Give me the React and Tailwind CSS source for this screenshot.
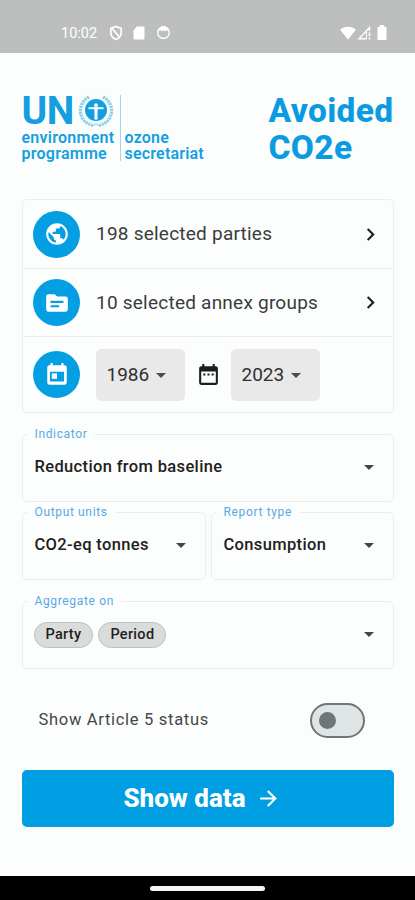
import React, { useState } from "react";
import {
  MdArrowDropDown,
  MdArrowForward,
  MdChevronRight,
  MdDateRange,
  MdPublic,
  MdTopic,
} from "react-icons/md";

const StatusBar = () => (
  <div className="flex h-[53px] items-center bg-[#bcbfbd] pt-3 pr-[28px] pl-[61px] text-white">
    <span className="mt-[3px] w-[38px] text-[14.500px] leading-none whitespace-nowrap">10:02</span>
    <svg className="ml-[10px] h-[16px] w-[14px]" viewBox="0 0 14 16" fill="none" stroke="currentColor" strokeWidth="1.700">
      <path d="M7 1.500 12.200 3.400V8c0 3-2.200 5.300-5.200 6.400C4 13.300 1.800 11 1.800 8V3.400Z" />
      <path d="m3 3.500 7.500 8.500" />
    </svg>
    <svg className="ml-[10px] h-[14px] w-[12px]" viewBox="0 0 12 14" fill="currentColor">
      <path d="M4 .5h6.500a1 1 0 0 1 1 1v11a1 1 0 0 1-1 1h-9a1 1 0 0 1-1-1V4.500Z" />
    </svg>
    <svg className="ml-[11px] h-[15px] w-[15px]" viewBox="0 0 15 15">
      <circle cx="7.500" cy="7.700" r="5.800" fill="none" stroke="currentColor" strokeWidth="1.400" />
      <path d="M2 6.600C2.600 3.200 4.700 1 7.500 1S12.400 3.200 13 6.600L10.600 5 9 6.500 7.500 5 6 6.500 4.400 5Z" fill="currentColor" />
    </svg>
    <svg className="ml-auto h-[14px] w-[16px]" viewBox="0 0 16 14" fill="currentColor">
      <path d="M0 3.800C4.500-.4 11.500-.4 16 3.800L8 13.500Z" />
    </svg>
    <svg className="ml-[1px] h-[14px] w-[14px]" viewBox="0 0 14 14" fill="none" stroke="currentColor">
      <path d="M9.500 12.700H2L12.500 1.500V5" strokeWidth="1.400" />
      <path d="M12.500 6.500V10M12.500 11.500v2" strokeWidth="1.600" />
      <path d="M9.500 6v6.500" strokeWidth="1" />
    </svg>
    <svg className="ml-[6px] h-[15px] w-[10px]" viewBox="0 0 10 15" fill="currentColor">
      <path d="M3 0h4v1.700h1.500a1 1 0 0 1 1 1V14a1 1 0 0 1-1 1h-7a1 1 0 0 1-1-1V2.700a1 1 0 0 1 1-1H3Z" />
    </svg>
  </div>
);

const Emblem = () => (
  <svg className="-mt-[4px] h-[34px] w-[36px]" viewBox="0 0 36 34" fill="none" stroke="#159fe0">
    {/* laurel branches */}
    <path d="M11 3C-1.500 9-.5 28 14.500 31M25 3C37.500 9 36.500 28 21.500 31" strokeWidth="3.200" strokeDasharray="2.200 .8" opacity=".5" />
    <path d="m13 32.500 5-2.500 5 2.500" strokeWidth="1" opacity=".6" />
    <circle cx="18" cy="16" r="12" fill="#fbfefd" stroke="none" />
    <circle cx="18" cy="16" r="11" fill="#159fe0" stroke="none" />
    {/* figure with open arms */}
    <circle cx="18" cy="11.200" r="1.900" fill="#fff" stroke="none" />
    <path d="M10.500 14.200h15" stroke="#fff" strokeWidth="1.900" />
    <path d="M18 13.500v12" stroke="#fff" strokeWidth="3" />
  </svg>
);

const TodayIcon = ({ size }) => (
  <svg width={size} height={size} viewBox="0 0 24 24" fill="currentColor" fillRule="evenodd">
    <path d="M6 1h2v2h8V1h2v2h1a2 2 0 0 1 2 2v14a2 2 0 0 1-2 2H5a2 2 0 0 1-2-2V5a2 2 0 0 1 2-2h1ZM5.500 9v9h13V9Z" />
    <path d="M7.200 10.500h4.800v5H7.200Z" />
  </svg>
);

const Logo = () => (
  <div className="flex h-[66px] text-[#159fe0]">
    <div className="w-[99.500px] border-r border-[#9ed5f2]">
      <div className="flex h-[35px] items-center">
        <span className="-mt-[4px] w-[56px] text-[39px] leading-[34px] font-bold tracking-[-0.500px]">UN</span>
        <Emblem />
      </div>
      <p className="text-[16px] leading-[16px] font-semibold tracking-[0.250px] whitespace-nowrap">
        environment
        <br />
        programme
      </p>
    </div>
    <p className="mt-[35px] pl-[3.500px] text-[16px] leading-[16px] font-semibold tracking-[0.200px]">
      ozone
      <br />
      secretariat
    </p>
  </div>
);

const IconCircle = ({ icon: Icon }) => (
  <span className="flex size-[47px] shrink-0 items-center justify-center rounded-full bg-[#049fe3] text-white">
    <Icon size={26} />
  </span>
);

const SelectionRow = ({ icon, label }) => (
  <button type="button" className="flex h-[68.500px] w-full items-center border-b border-[#eceeed] pt-px pr-[10px] pl-[10.500px] text-left">
    <IconCircle icon={icon} />
    <span className="ml-4 flex-1 text-[19px] tracking-[0.230px] whitespace-nowrap text-[#3a3c3b]">{label}</span>
    <MdChevronRight size={25} className="text-[#1c1d1d]" />
  </button>
);

const YearButton = ({ year }) => (
  <button type="button" className="flex h-[52px] w-[89px] items-center rounded-[5px] bg-[#e9e9e9] pt-px pl-[10.500px] text-[19px] text-[#2f3030]">
    {year}
    <MdArrowDropDown size={24} className="text-[#4b4d4c]" />
  </button>
);

const Field = ({ label, className, children }) => (
  <fieldset className={`h-[74px] min-w-0 rounded-[5px] border border-[#eceeed] pr-[12px] pl-[5px] ${className}`}>
    <legend className="h-[13px] px-[7px] text-[12px] leading-[13px] tracking-[0.650px] whitespace-nowrap text-[#58a9e4]">{label}</legend>
    <div className="flex h-[53px] items-center justify-between pl-[7px] text-[16.500px] font-medium tracking-[0.350px] text-[#1f2020]">
      {children}
      <MdArrowDropDown size={24} className="-mt-px text-[#444646]" />
    </div>
  </fieldset>
);

const Chip = ({ children }) => (
  <span className="flex h-[26px] items-center rounded-full border border-[#bfc1c0] bg-[#dadcdb] px-[11px] text-[14.500px] tracking-[0.300px]">
    {children}
  </span>
);

const App = () => {
  const [showStatus, setShowStatus] = useState(false);

  return (
    <div className="flex h-[900px] w-[415px] flex-col overflow-hidden bg-[#fbfefd] font-['Roboto',sans-serif]">
      <StatusBar />
      <main className="flex flex-1 flex-col px-[21.500px]">
        <header className="flex h-[146px] items-start justify-between pt-[42px]">
          <Logo />
          <h1 className="-mt-[3px] w-[125px] text-[33.500px] leading-[37px] font-extrabold tracking-[0.350px] whitespace-nowrap text-[#0b9be0]">
            Avoided
            <br />
            CO2e
          </h1>
        </header>

        <section className="h-[213.500px] rounded-[5px] border border-[#eceeed]">
          <SelectionRow icon={MdPublic} label="198 selected parties" />
          <SelectionRow icon={MdTopic} label="10 selected annex groups" />
          <div className="flex h-[75px] items-center pl-[10.500px]">
            <IconCircle icon={TodayIcon} />
            <div className="ml-4 flex items-center">
              <YearButton year="1986" />
              <MdDateRange size={25} className="mx-[10.500px] text-[#1c1d1d]" />
              <YearButton year="2023" />
            </div>
          </div>
        </section>

        <Field label="Indicator" className="mt-[15px]">
          Reduction from baseline
        </Field>
        <div className="mt-[4.500px] flex gap-[5px]">
          <Field label="Output units" className="w-[184px]">
            CO2-eq tonnes
          </Field>
          <Field label="Report type" className="flex-1">
            Consumption
          </Field>
        </div>
        <Field label="Aggregate on" className="mt-[15px]">
          <div className="-ml-px flex gap-[5px]">
            <Chip>Party</Chip>
            <Chip>Period</Chip>
          </div>
        </Field>

        <div className="mt-[33.500px] flex h-[35px] items-center justify-between pr-[29px] pl-[17px]">
          <span className="text-[16.500px] tracking-[0.700px] text-[#444746]">Show Article 5 status</span>
          <button
            type="button"
            role="switch"
            aria-checked={showStatus}
            aria-label="Show Article 5 status"
            onClick={() => setShowStatus(!showStatus)}
            className={`flex h-[35px] w-[55px] items-center rounded-full border-2 border-[#6f7675] bg-[#dfe4e4] px-[7px] ${showStatus ? "justify-end" : ""}`}
          >
            <span className="size-[17px] rounded-full bg-[#6f7675]" />
          </button>
        </div>

        <button
          type="button"
          className="mt-[32.500px] flex h-[57px] items-center justify-center gap-[10px] rounded-[5px] bg-[#009fe3] pr-[11px] text-[26px] font-extrabold text-white"
        >
          Show data
          <MdArrowForward size={25} />
        </button>
      </main>
      <div className="flex h-[24px] items-center justify-center bg-black">
        <span className="h-[5px] w-[115px] rounded-full bg-[#f4f4f4]" />
      </div>
    </div>
  );
};

export default App;
